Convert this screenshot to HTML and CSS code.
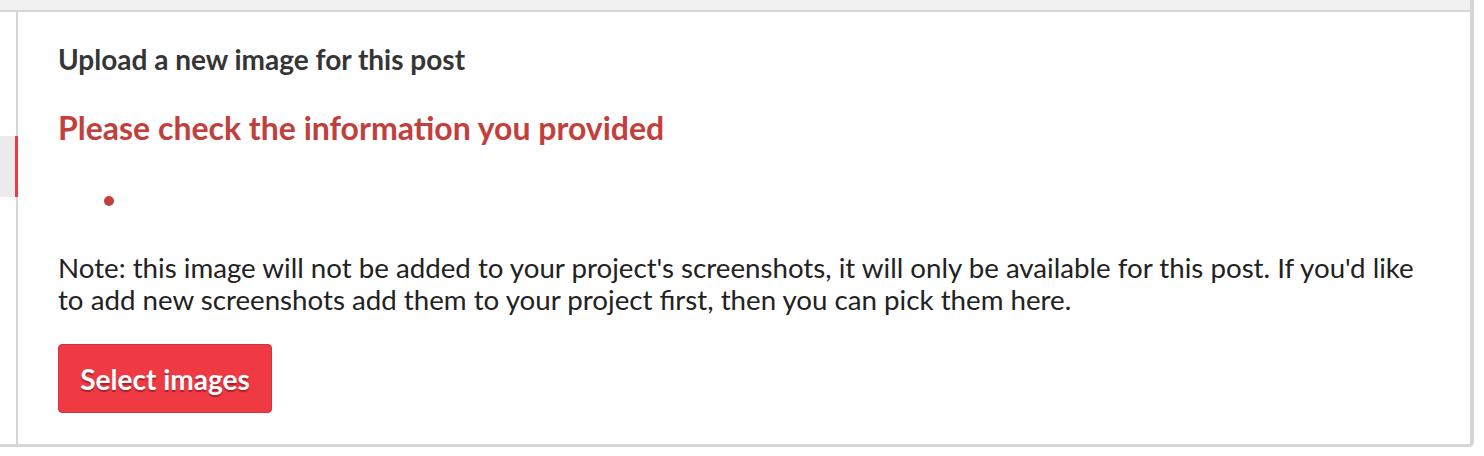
FILE: index.html
```html
<!DOCTYPE html>
<html lang="en">
<head>
<meta charset="utf-8">
<title>Upload image</title>
<link rel="stylesheet" href="styles.css">
</head>
<body>
<div class="frame">
  <div class="topstrip"></div>
  <div class="main">
    <aside class="sidebar">
      <div class="side-item active"></div>
    </aside>
    <section class="content">
      <h3 class="title">Upload a new image for this post</h3>
      <h2 class="error-title">Please check the information you provided</h2>
      <ul class="errors">
        <li class="error-item"><span class="dot"></span></li>
      </ul>
      <p class="note">Note: this image will not be added to your project's screenshots, it will only be available for this post. If you'd like to add new screenshots add them to your project first, then you can pick them here.</p>
      <button class="btn" type="button">Select images</button>
    </section>
  </div>
</div>
</body>
</html>
```
FILE: styles.css
```css
* { box-sizing: border-box; }
html, body { margin: 0; padding: 0; background: #ffffff; }
body {
  font-family: Lato, "Open Sans", "Liberation Sans", sans-serif;
  width: 1484px;
  height: 456px;
  overflow: hidden;
}
.frame {
  width: 1474px;
  height: 447px;
  border-right: 4px solid #d6d6d6;
  border-bottom: 3px solid #d6d6d6;
  border-bottom-right-radius: 5px;
  display: flex;
  flex-direction: column;
  background: #ffffff;
}
.topstrip {
  height: 12px;
  background: #f1f1f1;
  border-bottom: 2px solid #d6d6d6;
  flex: none;
}
.main {
  flex: 1;
  display: flex;
}
.sidebar {
  width: 18px;
  flex: none;
  border-right: 2px solid #d6d6d6;
  padding-top: 124px;
}
.side-item {
  height: 61px;
}
.side-item.active {
  background: #ebebeb;
  border-right: 3px solid #ef3a44;
  margin-right: -2px;
}
.content {
  flex: 1;
  padding: 30px 40px 0 40px;
}
.title {
  margin: 0;
  font-size: 28px;
  line-height: 34px;
  font-weight: 700;
  color: #353535;
}
.error-title {
  margin: 33px 0 0 0;
  font-size: 32px;
  line-height: 38px;
  font-weight: 700;
  color: #c2403c;
}
.errors {
  list-style: none;
  margin: 0;
  padding: 0;
}
.error-item {
  height: 105px;
  display: flex;
  align-items: flex-start;
  padding-left: 46px;
  padding-top: 49px;
}
.dot {
  width: 10px;
  height: 10px;
  border-radius: 50%;
  background: #c2403c;
}
.note {
  margin: 0;
  font-size: 27.7px;
  line-height: 32px;
  color: #222222;
}
.btn {
  display: block;
  margin-top: 28px;
  width: 214px;
  height: 69px;
  background: #ef3a44;
  border: 1px solid #d1333c;
  border-radius: 4px;
  color: #ffffff;
  font-family: Lato, "Open Sans", "Liberation Sans", sans-serif;
  font-size: 28px;
  font-weight: 700;
  text-shadow: 0 2px 1px rgba(120, 20, 25, 0.6);
  padding: 0;
}
```
